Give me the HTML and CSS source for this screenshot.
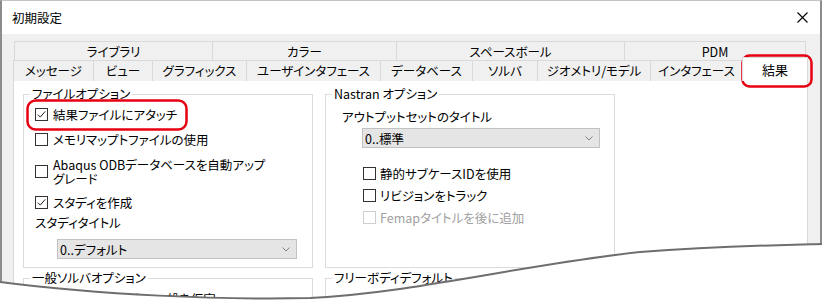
FILE: index.html
```html
<!DOCTYPE html>
<html lang="ja">
    <head>
        <meta charset="utf-8">
        <title>初期設定</title>
        <link rel="stylesheet" href="styles.css">
    </head>
    <body>
        <div class="window">
            <div class="titlebar">
                <span class="title">初期設定</span>
                <svg class="close" width="11" height="11" viewBox="0 0 11 11">
                    <path d="M0.5 0.5 L10.5 10.5 M10.5 0.5 L0.5 10.5" stroke="#000" stroke-width="1.1" fill="none"/>
                </svg>
            </div>

            <div class="content">
                <div class="tabs tabs-top">
                    <div class="tab">ライブラリ</div>
                    <div class="tab">カラー</div>
                    <div class="tab">スペースボール</div>
                    <div class="tab tab-last">PDM</div>
                </div>
                <div class="tabs tabs-bottom">
                    <div class="tab">メッセージ</div>
                    <div class="tab">ビュー</div>
                    <div class="tab">グラフィックス</div>
                    <div class="tab">ユーザインタフェース</div>
                    <div class="tab">データベース</div>
                    <div class="tab">ソルバ</div>
                    <div class="tab">ジオメトリ/モデル</div>
                    <div class="tab">インタフェース</div>
                    <div class="tab tab-active">結果</div>
                </div>

                <div class="panel">
                    <fieldset class="group">
                        <legend>ファイルオプション</legend>
                        <div class="opt">
                            <svg class="cb" width="13" height="13"><rect x="0.5" y="0.5" width="12" height="12" fill="#fff" stroke="#333"/><path d="M2.8 6.6 L5.3 9.1 L10.2 3.4" stroke="#222" fill="none"/></svg>
                            <span>結果ファイルにアタッチ</span>
                        </div>
                        <div class="opt">
                            <svg class="cb" width="13" height="13"><rect x="0.5" y="0.5" width="12" height="12" fill="#fff" stroke="#333"/></svg>
                            <span>メモリマップトファイルの使用</span>
                        </div>
                        <div class="opt opt-tall">
                            <svg class="cb" width="13" height="13"><rect x="0.5" y="0.5" width="12" height="12" fill="#fff" stroke="#333"/></svg>
                            <span class="two-line">Abaqus ODBデータベースを自動アップ<br>グレード</span>
                        </div>
                        <div class="opt opt-short">
                            <svg class="cb" width="13" height="13"><rect x="0.5" y="0.5" width="12" height="12" fill="#fff" stroke="#333"/><path d="M2.8 6.6 L5.3 9.1 L10.2 3.4" stroke="#222" fill="none"/></svg>
                            <span>スタディを作成</span>
                        </div>
                        <div class="field-label">スタディタイトル</div>
                        <div class="select select-left">
                            <span>0..デフォルト</span>
                            <svg width="8" height="5"><path d="M0.5 0.5 L4 4 L7.5 0.5" stroke="#808080" fill="none"/></svg>
                        </div>
                    </fieldset>

                    <fieldset class="group">
                        <legend>Nastran オプション</legend>
                        <div class="field-label field-label-right">アウトプットセットのタイトル</div>
                        <div class="select select-right">
                            <span>0..標準</span>
                            <svg width="8" height="5"><path d="M0.5 0.5 L4 4 L7.5 0.5" stroke="#808080" fill="none"/></svg>
                        </div>
                        <div class="opts-right">
                            <div class="opt opt-short opt-right">
                                <svg class="cb" width="13" height="13"><rect x="0.5" y="0.5" width="12" height="12" fill="#fff" stroke="#333"/></svg>
                                <span>静的サブケースIDを使用</span>
                            </div>
                            <div class="opt opt-short opt-right">
                                <svg class="cb" width="13" height="13"><rect x="0.5" y="0.5" width="12" height="12" fill="#fff" stroke="#333"/></svg>
                                <span>リビジョンをトラック</span>
                            </div>
                            <div class="opt opt-short opt-right disabled">
                                <svg class="cb" width="13" height="13"><rect x="0.5" y="0.5" width="12" height="12" fill="#fff" stroke="#cfcfcf"/></svg>
                                <span>Femapタイトルを後に追加</span>
                            </div>
                        </div>
                    </fieldset>

                    <fieldset class="group">
                        <legend>一般ソルバオプション</legend>
                        <div class="opt">
                            <svg class="cb" width="13" height="13"><rect x="0.5" y="0.5" width="12" height="12" fill="#fff" stroke="#333"/></svg>
                            <span>コンタクトデータで一般を仮定</span>
                        </div>
                    </fieldset>

                    <fieldset class="group">
                        <legend>フリーボディデフォルト</legend>
                    </fieldset>
                </div>
            </div>
        </div>

        <!-- annotations and torn edge drawn over the screenshot -->
        <svg class="overlay" width="824" height="303" viewBox="0 0 824 303">
            <rect x="27.5" y="100.5" width="159" height="29" rx="8" fill="none" stroke="#e60012" stroke-width="2.5"/>
            <rect x="742.5" y="55.5" width="69" height="31" rx="7" fill="none" stroke="#e60012" stroke-width="2.5"/>
            <path d="M0,282 C100,295 220,300 310,298 C420,292 520,265 640,252 C720,246 780,245 824,244 L824,303 L0,303 Z" fill="#fff"/>
            <path d="M0,282 C100,295 220,300 310,298 C420,292 520,265 640,252 C720,246 780,245 822,244" fill="none" stroke="#6e6e6e" stroke-width="2"/>
        </svg>
    </body>
</html>
```

FILE: styles.css
```css
html {
    height: 100%;
}
body {
    margin: 0;
    width: 824px;
    height: 303px;
    overflow: hidden;
    position: relative;
    background-color: #fff;
    font-family: "Noto Sans CJK JP", "Noto Sans", sans-serif;
    font-size: 12.5px;
    font-feature-settings: "palt";
    color: #000;
}
.window {
    box-sizing: border-box;
    width: 822px;
    height: 303px;
    overflow: hidden;
    background-color: #f0f0f0;
    border-left: 2px solid #8c8c8c;
    border-right: 2px solid #8c8c8c;
    border-top: 1px solid #c4c4c4;
}
.titlebar {
    height: 33px;
    background-color: #fff;
    display: flex;
    align-items: center;
    justify-content: space-between;
    padding: 0 12px 0 10px;
}
.title {
    font-feature-settings: normal;
}
.content {
    padding: 7px 12px 0 11px;
}
.tabs {
    display: grid;
}
.tabs-top {
    grid-template-columns: 198px 184px 228px 182px;
    height: 19px;
    margin: 0 2px 0 1px;
}
.tabs-bottom {
    grid-template-columns: 80px 59px 94px 134px 92px 65px 113px 92px 66px;
    height: 20px;
}
.tab {
    box-sizing: border-box;
    border-top: 1px solid #d9d9d9;
    border-left: 1px solid #d9d9d9;
    background-color: #f0f0f0;
    text-align: center;
    padding-top: 1px;
    line-height: 18px;
    white-space: nowrap;
}
.tab-last {
    border-right: 1px solid #d9d9d9;
}
.tab-active {
    position: relative;
    z-index: 1;
    height: 24px;
    margin-top: -3px;
    padding-top: 3px;
    background-color: #fff;
    border-right: 1px solid #d9d9d9;
    font-size: 13px;
}
.panel {
    box-sizing: border-box;
    height: 240px;
    overflow: hidden;
    background-color: #fff;
    border: 1px solid #d9d9d9;
    display: grid;
    grid-template-columns: 290px 290px;
    column-gap: 12px;
    row-gap: 2px;
    align-content: start;
    padding: 5px 9px 0;
}
.group {
    margin: 0;
    padding: 0 0 8px;
    min-width: 0;
    border: 1px solid #dcdcdc;
}
.group legend {
    margin-left: 6px;
    padding: 0 2px;
    line-height: 16px;
}
.opt {
    display: flex;
    align-items: center;
    gap: 5px;
    height: 25px;
    padding-left: 11px;
    white-space: nowrap;
}
.opt-tall {
    height: 39px;
}
.opt-short {
    height: 22px;
}
.two-line {
    line-height: 14px;
}
.cb {
    flex: none;
}
.field-label {
    height: 20px;
    line-height: 20px;
    padding-left: 11px;
}
.field-label-right {
    margin-top: 4px;
    height: 22px;
    line-height: 22px;
    padding-left: 16px;
}
.select {
    box-sizing: border-box;
    height: 20px;
    display: flex;
    align-items: center;
    justify-content: space-between;
    padding: 0 6px 0 2px;
    background-color: #e5e5e5;
    border: 1px solid #c2c2c2;
}
.select-left {
    margin: 6px 0 0 33px;
    width: 240px;
}
.select-right {
    margin-left: 36px;
    width: 238px;
}
.opts-right {
    margin-top: 14px;
}
.opt-right {
    padding-left: 37px;
    gap: 4px;
}
.disabled {
    color: #a0a0a0;
}
.overlay {
    position: absolute;
    left: 0;
    top: 0;
    pointer-events: none;
}
```
